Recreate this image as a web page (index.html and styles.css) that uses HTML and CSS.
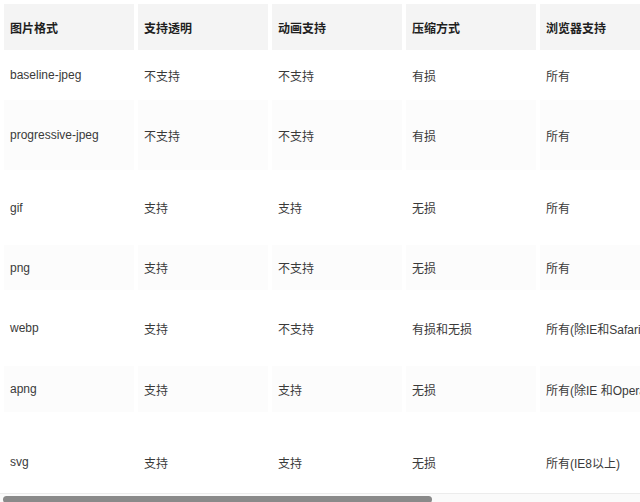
FILE: index.html
```html
<!DOCTYPE html>
<html lang="zh">
<head>
<meta charset="utf-8">
<link rel="stylesheet" href="styles.css">
</head>
<body>
<div class="wrap">
  <table class="tbl">
    <colgroup>
      <col class="c"><col class="c"><col class="c"><col class="c"><col class="last">
    </colgroup>
    <thead>
      <tr class="h46"><th>图片格式</th><th>支持透明</th><th>动画支持</th><th>压缩方式</th><th>浏览器支持</th></tr>
    </thead>
    <tbody>
      <tr class="h42"><td>baseline-jpeg</td><td>不支持</td><td>不支持</td><td>有损</td><td>所有</td></tr>
      <tr class="h70 alt"><td>progressive-jpeg</td><td>不支持</td><td>不支持</td><td>有损</td><td>所有</td></tr>
      <tr class="h67"><td>gif</td><td>支持</td><td>支持</td><td>无损</td><td>所有</td></tr>
      <tr class="h45 alt"><td>png</td><td>支持</td><td>不支持</td><td>无损</td><td>所有</td></tr>
      <tr class="h68"><td>webp</td><td>支持</td><td>不支持</td><td>有损和无损</td><td>所有(除IE和Safari)</td></tr>
      <tr class="h46 alt"><td>apng</td><td>支持</td><td>支持</td><td>无损</td><td>所有(除IE 和Opera)</td></tr>
      <tr class="h92"><td>svg</td><td>支持</td><td>支持</td><td>无损</td><td>所有(IE8以上)</td></tr>
    </tbody>
  </table>
  <div class="scrollbar"><div class="thumb"></div></div>
</div>
</body>
</html>
```
FILE: styles.css
```css
html, body {
  margin: 0;
  padding: 0;
  background: #fff;
}
body {
  font-family: "Liberation Sans", "Noto Sans CJK SC", sans-serif;
  font-size: 12px;
  color: #3a3a3a;
}
.wrap {
  position: relative;
  width: 640px;
  height: 502px;
  overflow: hidden;
}
.tbl {
  border-collapse: separate;
  border-spacing: 4px;
  table-layout: fixed;
  width: 938px;
  margin: 0;
}
.tbl col.c { width: 130px; }
.tbl col.last { width: 398px; }
.tbl th, .tbl td {
  padding: 0 6px;
  text-align: left;
  vertical-align: middle;
  white-space: nowrap;
  box-sizing: border-box;
}
.tbl th {
  background: #f4f4f4;
  color: #1f1f1f;
  font-weight: bold;
}
.tbl tr.alt td { background: #fcfcfc; }
.h42 { height: 42px; }
.h45 { height: 45px; }
.h46 { height: 46px; }
.h67 { height: 67px; }
.h68 { height: 68px; }
.h70 { height: 70px; }
.h92 { height: 92px; }
.scrollbar {
  position: absolute;
  left: 0;
  right: 0;
  bottom: 0;
  height: 8px;
  background: #fafafa;
  border-top: 1px solid #ececec;
}
.thumb {
  position: absolute;
  left: 3px;
  top: 2px;
  width: 429px;
  height: 7px;
  border-radius: 4px;
  background: #8a8a8a;
}
```
